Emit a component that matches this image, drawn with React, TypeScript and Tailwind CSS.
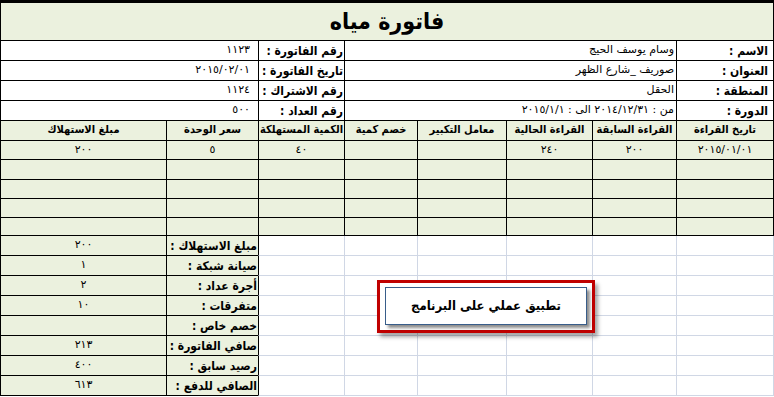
import React from 'react';

// ألوان ورقة الإكسل
const green = 'bg-[#ebf1de]';
const cond = "font-['DejaVu_Sans_Condensed','DejaVu_Sans',sans-serif]";

type Row = { label: string; value: string };

const summary: Row[] = [
  { label: 'مبلغ الاستهلاك :', value: '٢٠٠' },
  { label: 'صيانة شبكة :', value: '١' },
  { label: 'أجرة عداد :', value: '٢' },
  { label: 'متفرقات :', value: '١٠' },
  { label: 'خصم خاص :', value: '' },
  { label: 'صافي الفاتورة :', value: '٢١٣' },
  { label: 'رصيد سابق :', value: '٤٠٠' },
  { label: 'الصافي للدفع :', value: '٦١٣' },
];

const headers = [
  'تاريخ القراءة',
  'القراءة السابقة',
  'القراءة الحالية',
  'معامل التكبير',
  'خصم كمية',
  'الكمية المستهلكة',
  'سعر الوحدة',
  'مبلغ الاستهلاك',
];

const firstRow = ['٢٠١٥/٠١/٠١', '٢٠٠', '٢٤٠', '', '', '٤٠', '٥', '٢٠٠'];

const info = [
  { rl: 'الاسم :', rv: 'وسام يوسف الحيج', ll: 'رقم الفاتورة :', lv: '١١٢٣' },
  { rl: 'العنوان :', rv: 'صوريف _شارع الظهر', ll: 'تاريخ الفاتورة :', lv: '٢٠١٥/٠٢/٠١' },
  { rl: 'المنطقة :', rv: 'الحقل', ll: 'رقم الاشتراك :', lv: '١١٢٤' },
  { rl: 'الدورة :', rv: 'من : ٢٠١٤/١٢/٣١ الى : ٢٠١٥/١/١', ll: 'رقم العداد :', lv: '٥٠٠' },
];

export default function App() {
  return (
    <div className="relative w-[774px] h-[397px] bg-white overflow-hidden font-['DejaVu_Sans',sans-serif] text-black">
      <div
        dir="rtl"
        className="grid grid-cols-[98px_84px_86px_89px_73px_86px_92px_166px] grid-rows-[41px_20px_20px_20px_20px_20px_19px_20px_19px_19px_18px_20px_20px_20px_20px_20px_20px_20px_20px]"
      >
        {/* العنوان */}
        <div className={`col-span-8 ${green} border-t-[3px] border-x border-b border-black flex items-center justify-center text-[23px] font-bold ${cond}`}>
          فاتورة مياه
        </div>

        {/* بيانات المشترك */}
        {info.map((r, i) => (
          <React.Fragment key={i}>
            <div className={`border-r border-l border-b border-black bg-white flex items-center pr-[5px] text-[12px] font-bold whitespace-nowrap ${cond}`}>
              {r.rl}
            </div>
            <div className="col-span-4 border-l border-b border-black bg-white flex items-center pr-[2px] text-[11px] whitespace-nowrap">
              {r.rv}
            </div>
            <div className={`border-l border-b border-black bg-white flex items-center pr-[1px] text-[12px] font-bold whitespace-nowrap ${cond}`}>
              {r.ll}
            </div>
            <div className="col-span-2 border-l border-b border-black bg-white flex items-center pr-[8px] text-[11px] whitespace-nowrap">
              {r.lv}
            </div>
          </React.Fragment>
        ))}

        {/* جدول القراءات */}
        {headers.map((h, i) => (
          <div
            key={h}
            className={`${green} border-l border-b border-black ${i === 0 ? 'border-r' : ''} flex items-center justify-center text-[11px] font-bold whitespace-nowrap overflow-hidden ${cond}`}
          >
            {h}
          </div>
        ))}
        {firstRow.map((v, i) => (
          <div
            key={'r' + i}
            className={`${green} border-l border-b border-black ${i === 0 ? 'border-r' : ''} flex items-center justify-center text-[11px]`}
          >
            {v}
          </div>
        ))}
        {[0, 1, 2, 3].map((r) =>
          headers.map((_, i) => (
            <div
              key={`e${r}-${i}`}
              className={`${green} border-l border-b border-black ${i === 0 ? 'border-r' : ''}`}
            />
          ))
        )}

        {/* الملخص */}
        {summary.map((s) => (
          <React.Fragment key={s.label}>
            {[0, 1, 2, 3, 4, 5].map((i) => (
              <div
                key={i}
                className={`bg-white border-b border-[#d0d7e5] ${i === 5 ? 'border-l border-l-black' : 'border-l'} ${i === 0 ? 'border-r' : ''}`}
              />
            ))}
            <div className={`${green} border-l border-b border-black flex items-center pr-[1px] text-[12px] font-bold whitespace-nowrap ${cond}`}>
              {s.label}
            </div>
            <div className={`${green} border-l border-b border-black flex items-center justify-center text-[11px]`}>
              {s.value}
            </div>
          </React.Fragment>
        ))}
      </div>

      {/* ملاحظة */}
      <div className="absolute left-[377px] top-[280px] w-[218px] h-[53px] border-[3px] border-[#c00000] bg-white shadow-[3px_4px_4px_rgba(0,0,0,0.35)] pl-[5px] pt-[4px]">
        <div
          dir="rtl"
          className={`w-[202px] h-[38px] border border-[#385d8a] bg-white shadow-[3px_3px_3px_rgba(0,0,0,0.45)] flex items-center justify-center text-[13px] font-bold ${cond}`}
        >
          تطبيق عملي على البرنامج
        </div>
      </div>
    </div>
  );
}
